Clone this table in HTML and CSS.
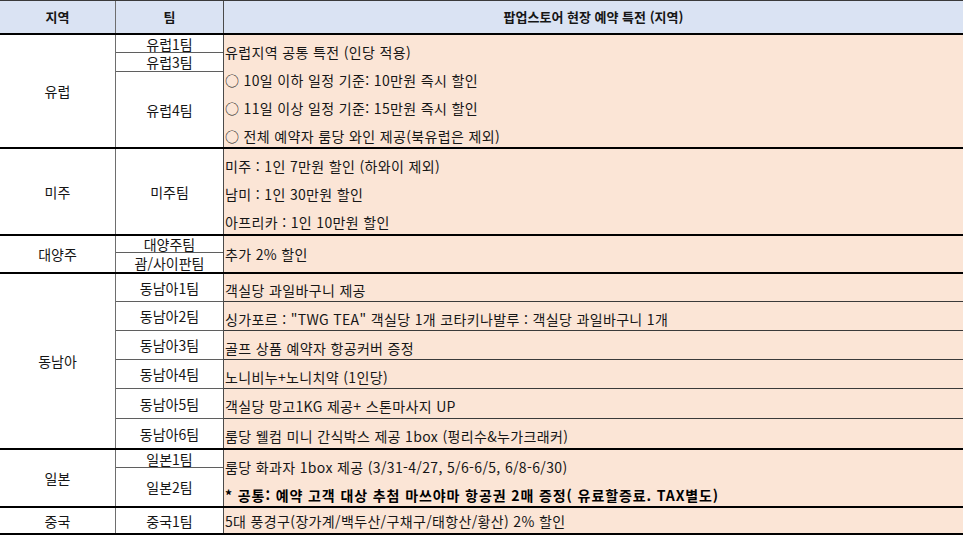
FILE: index.html
```html
<!DOCTYPE html>
<html lang="ko">
<head>
<meta charset="utf-8">
<title>팝업스토어 현장 예약 특전</title>
<link rel="stylesheet" href="styles.css">
</head>
<body>
<div class="sheet">
  <div class="sec head">
    <div class="c1 cell">지역</div>
    <div class="c2 cell">팀</div>
    <div class="c3 cell">팝업스토어 현장 예약 특전 (지역)</div>
  </div>

  <div class="sec eu">
    <div class="c1 cell">유럽</div>
    <div class="c2 teams">
      <div class="team h18 line">유럽1팀</div>
      <div class="team h19 line">유럽3팀</div>
      <div class="team fill">유럽4팀</div>
    </div>
    <div class="c3 perks">
      <div class="perk h28">유럽지역 공통 특전 (인당 적용)</div>
      <div class="perk h28">○ 10일 이하 일정 기준: 10만원 즉시 할인</div>
      <div class="perk h28">○ 11일 이상 일정 기준: 15만원 즉시 할인</div>
      <div class="perk h28">○ 전체 예약자 룸당 와인 제공(북유럽은 제외)</div>
    </div>
  </div>

  <div class="sec am">
    <div class="c1 cell">미주</div>
    <div class="c2 teams">
      <div class="team fill">미주팀</div>
    </div>
    <div class="c3 perks">
      <div class="perk h28">미주 : 1인 7만원 할인 (하와이 제외)</div>
      <div class="perk h28">남미 : 1인 30만원 할인</div>
      <div class="perk fill">아프리카 : 1인 10만원 할인</div>
    </div>
  </div>

  <div class="sec oc">
    <div class="c1 cell">대양주</div>
    <div class="c2 teams">
      <div class="team h17 line">대양주팀</div>
      <div class="team fill">괌/사이판팀</div>
    </div>
    <div class="c3 perks mid">
      <div class="perk single">추가 2% 할인</div>
    </div>
  </div>

  <div class="sec sea">
    <div class="c1 cell">동남아</div>
    <div class="c2 teams">
      <div class="team h28 line">동남아1팀</div>
      <div class="team h29 line">동남아2팀</div>
      <div class="team h29 line">동남아3팀</div>
      <div class="team h29 line">동남아4팀</div>
      <div class="team h30 line">동남아5팀</div>
      <div class="team fill">동남아6팀</div>
    </div>
    <div class="c3 perks">
      <div class="perk h28 rule">객실당 과일바구니 제공</div>
      <div class="perk h29 rule">싱가포르 : "TWG TEA" 객실당 1개 코타키나발루 : 객실당 과일바구니 1개</div>
      <div class="perk h29 rule">골프 상품 예약자 항공커버 증정</div>
      <div class="perk h29 rule">노니비누+노니치약 (1인당)</div>
      <div class="perk h30 rule">객실당 망고1KG 제공+ 스톤마사지 UP</div>
      <div class="perk fill">룸당 웰컴 미니 간식박스 제공 1box (펑리수&amp;누가크래커)</div>
    </div>
  </div>

  <div class="sec jp">
    <div class="c1 cell">일본</div>
    <div class="c2 teams">
      <div class="team h18 line">일본1팀</div>
      <div class="team fill">일본2팀</div>
    </div>
    <div class="c3 perks">
      <div class="perk h28">룸당 화과자 1box 제공 (3/31-4/27, 5/6-6/5, 6/8-6/30)</div>
      <div class="perk fill strong">* 공통: 예약 고객 대상 추첨 마쓰야마 항공권 2매 증정( 유료할증료. TAX별도)</div>
    </div>
  </div>

  <div class="sec cn">
    <div class="c1 cell">중국</div>
    <div class="c2 teams">
      <div class="team fill">중국1팀</div>
    </div>
    <div class="c3 perks mid">
      <div class="perk single">5대 풍경구(장가계/백두산/구채구/태항산/황산) 2% 할인</div>
    </div>
  </div>
</div>
</body>
</html>
```

FILE: styles.css
```css
* { box-sizing: border-box; }

html, body {
  margin: 0;
  padding: 0;
  background: #ffffff;
}

body {
  font-family: "Noto Sans CJK KR", "Noto Sans", sans-serif;
  font-size: 14px;
  color: #161616;
}

.sheet {
  width: 963px;
  border-top: 1px solid #3a3a3a;
}

.sec {
  display: grid;
  grid-template-columns: 116px 108px 1fr;
  border-bottom: 2px solid #000;
}

.head { height: 34px; background: #dae3f3; font-weight: 700; font-size: 13px; }
.eu  { height: 114px; }
.am  { height: 87px; }
.oc  { height: 38px; }
.sea { height: 176px; }
.jp  { height: 58px; }
.cn  { height: 27px; }

.c1 { border-right: 1px solid #6e6e6e; }
.c2 { border-right: 1px solid #4a4a4a; }
.c3 { background: #fbe5d6; }
.head .c3 { background: #dae3f3; }

.cell {
  display: flex;
  align-items: center;
  justify-content: center;
  line-height: 18px;
}

.teams {
  display: flex;
  flex-direction: column;
}

.team {
  display: flex;
  align-items: center;
  justify-content: center;
  line-height: 16px;
  white-space: nowrap;
}

.team.line { border-bottom: 1px solid #5f5f5f; }

.perks {
  display: flex;
  flex-direction: column;
}

.perks.mid { justify-content: center; }

.perk {
  display: flex;
  align-items: center;
  padding: 5px 0 0 1px;
  line-height: 18px;
  letter-spacing: 0.35px;
  white-space: nowrap;
}

.perk.single { padding-top: 0; }
.perk.rule { border-bottom: 1px solid #3a3a3a; }
.perk.strong { font-weight: 700; color: #000; letter-spacing: 0.9px; }

.fill { flex: 1 1 auto; }
.h17 { height: 17px; flex: none; }
.h18 { height: 18px; flex: none; }
.h19 { height: 19px; flex: none; }
.h28 { height: 28px; flex: none; }
.h29 { height: 29px; flex: none; }
.h30 { height: 30px; flex: none; }
```
